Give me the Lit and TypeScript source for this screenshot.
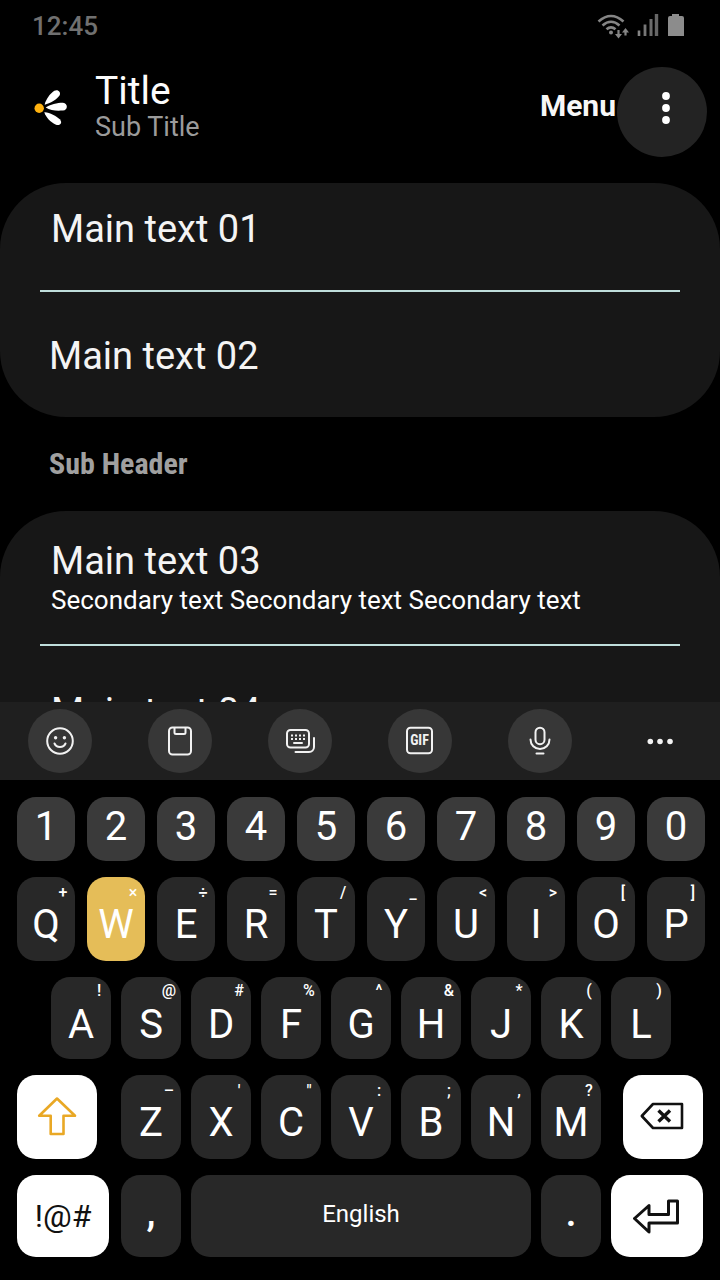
import { LitElement, html, css, svg, nothing } from "lit";
import { customElement, state } from "lit/decorators.js";

type Cap = { main: string; hint?: string };

const caps = (letters: string, hints: string[]): Cap[] =>
  [...letters].map((main, i) => ({ main, hint: hints[i] }));

const NUMBERS = caps("1234567890", []);
const TOP = caps("QWERTYUIOP", ["+", "×", "÷", "=", "/", "_", "<", ">", "[", "]"]);
const HOME = caps("ASDFGHJKL", ["!", "@", "#", "%", "^", "&", "*", "(", ")"]);
const BOTTOM = caps("ZXCVBNM", ["–", "'", '"', ":", ";", ",", "?"]);

@customElement("app-status-bar")
export class AppStatusBar extends LitElement {
  static styles = css`
    :host {
      display: flex;
      align-items: center;
      justify-content: space-between;
      height: 52px;
      padding: 0 34px 0 32px;
      font-size: 26px;
      line-height: 52px;
    }
    .time {
      font-weight: 500;
      color: #707070;
    }
    .icons {
      display: block;
      width: 90px;
      height: 28px;
    }
  `;
  render() {
    return html`
      <span class="time">12:45</span>
      <svg class="icons" viewBox="0 0 90 28" fill="none" stroke="#858585" stroke-width="2.6" aria-hidden="true">
        <path d="M2.5 9.5Q15 -1.500 27.500 9.500" />
        <path d="M6.500 13.500Q15 6 23.500 13.500" />
        <path d="M10.500 17.300Q15 13.300 19.500 17.300" />
        <circle cx="15" cy="20.500" r="2" fill="#858585" stroke="none" />
        <path d="M22.500 18v4M29.500 19v4.500" stroke-width="2.200" />
        <path d="M19 22h7l-3.500 4.500zM26 20.500l3.500-4.500l3.500 4.500z" fill="#858585" stroke="none" />
        <path d="M43 18.500v5.500" stroke="#858585" stroke-width="2.600" />
        <path d="M49 12.500v11.500" stroke="#767676" stroke-width="2.800" />
        <path d="M55 7v17" stroke="#6c6c6c" stroke-width="3" />
        <path d="M60.500 2v22" stroke="#666" stroke-width="3.400" />
        <path d="M76 2h7v2h3a2 2 0 0 1 2 2v18h-16v-18a2 2 0 0 1 2-2h2z" fill="#8c8c8c" stroke="none" />
      </svg>
    `;
  }
}

@customElement("app-header")
export class AppHeader extends LitElement {
  static styles = css`
    :host {
      display: flex;
      align-items: center;
      padding: 14px 13px 0 30px;
      height: 92px;
    }
    .logo {
      flex: none;
      width: 40px;
      height: 40px;
      margin-bottom: 8px;
    }
    .titles {
      flex: 1;
      min-width: 0;
      margin: 0 0 10px 25px;
    }
    h1,
    p {
      margin: 0;
      font-weight: 400;
    }
    h1 {
      font-size: 39px;
      line-height: 40px;
      color: #fcfcfc;
    }
    p {
      font-size: 27px;
      line-height: 32px;
      color: #9b9b9b;
    }
    button {
      border: 0;
      padding: 0;
      background: none;
      font: inherit;
      color: #f7f7f7;
      cursor: pointer;
    }
    .menu {
      font-size: 30px;
      line-height: 36px;
      font-weight: 700;
      margin: 0 1px 12px 0;
    }
    .more {
      width: 90px;
      height: 90px;
      border-radius: 50%;
      background: #232323;
    }
    .more svg {
      display: block;
      width: 90px;
      height: 90px;
    }
  `;
  render() {
    return html`
      <svg class="logo" viewBox="0 0 40 40" fill="#fff" aria-hidden="true">
        <circle cx="9.200" cy="20.300" r="4.700" fill="#ffb20f" />
        <path d="M14.600 16.700C15.500 12 20 5.500 24.300 2.800C27.800.8 31.200 4 29.600 7.300C27.300 11.600 20 15.300 14.600 16.700Z" />
        <path d="M15.700 19.500C20 16.500 28 14.600 33 14.700C38.300 15.200 38 22.300 33 22.500C27 22.900 20.500 22.800 15.700 19.500Z" />
        <path d="M14.300 24.200C19 23.800 26.500 28 29.800 31.300C33.200 35.200 29.500 38.500 25.500 36.500C20.500 34 16 29.500 14.300 24.200Z" />
      </svg>
      <div class="titles">
        <h1>Title</h1>
        <p>Sub Title</p>
      </div>
      <button class="menu" type="button">Menu</button>
      <button class="more" type="button" aria-label="More options">
        <svg viewBox="0 0 90 90" fill="#fff" aria-hidden="true">
          <circle cx="49" cy="29" r="3.900" />
          <circle cx="49" cy="41" r="3.900" />
          <circle cx="49" cy="53" r="3.900" />
        </svg>
      </button>
    `;
  }
}

@customElement("app-list")
export class AppList extends LitElement {
  static styles = css`
    :host {
      display: block;
      color: #f4f4f4;
    }
    ul {
      margin: 0;
      padding: 0 40px;
      list-style: none;
      background: #171717;
      border-radius: 66px;
    }
    li {
      padding: 23px 11px 38px;
      font-size: 38px;
      line-height: 46px;
    }
    li + li {
      border-top: 2px solid #bfdedb;
      padding: 41px 9px 38px;
    }
    .detailed li:first-child {
      padding: 27px 11px 28px;
    }
    .detailed li + li {
      padding: 43px 11px 38px;
    }
    .secondary {
      display: block;
      font-size: 26px;
      line-height: 32px;
      color: #fff;
    }
    h2 {
      margin: 0;
      padding: 0 49px;
      font-family: "Roboto Condensed", Roboto, sans-serif;
      font-size: 30px;
      line-height: 94px;
      font-weight: 700;
      color: #a0a0a0;
    }
  `;
  render() {
    return html`
      <ul>
        <li>Main text 01</li>
        <li>Main text 02</li>
      </ul>
      <h2>Sub Header</h2>
      <ul class="detailed">
        <li>
          Main text 03
          <span class="secondary">Secondary text Secondary text Secondary text</span>
        </li>
        <li>Main text 04</li>
      </ul>
    `;
  }
}

const TOOLS = [
  {
    label: "Emoji",
    art: svg`<circle cx="16" cy="16" r="12.800" />
      <path d="M10.500 18.500Q12 22 16 22T21.500 18.500" stroke-linecap="round" />
      <g fill="#f2f2f2" stroke="none"><circle cx="11.600" cy="12.800" r="1.700" /><circle cx="20.400" cy="12.800" r="1.700" /></g>`,
  },
  {
    label: "Clipboard",
    art: svg`<rect x="5" y="2.500" width="22" height="27" rx="3.500" />
      <path d="M10.500 3v4.500a1.500 1.500 0 0 0 1.500 1.500h8a1.500 1.500 0 0 0 1.500-1.500v-4.500" />`,
  },
  {
    label: "Keyboard modes",
    art: svg`<rect x="3" y="5" width="22" height="17.500" rx="3.500" />
      <path d="M30 13v9a5 5 0 0 1-5 5h-13.500" stroke-linecap="round" />
      <path d="M7 10.500h14M7 14h14" stroke-dasharray="2 2" />
      <path d="M10 18h8" stroke-linecap="round" />`,
  },
  {
    label: "GIF",
    art: svg`<rect x="3" y="2.800" width="25" height="25.500" rx="3.500" />
      <text class="gif" x="15.500" y="20" text-anchor="middle">GIF</text>`,
  },
  {
    label: "Voice input",
    art: svg`<rect x="11.500" y="2.700" width="9" height="16.500" rx="4.500" />
      <path d="M6.500 14.500a9.500 9.500 0 0 0 19 0M12.500 28.500h7" stroke-linecap="round" />`,
  },
];

@customElement("app-toolbar")
export class AppToolbar extends LitElement {
  static styles = css`
    :host {
      display: grid;
      grid-template-columns: repeat(6, 1fr);
      align-items: center;
      justify-items: center;
      height: 78px;
      background: #1f1f1f;
    }
    button {
      display: grid;
      place-items: center;
      width: 64px;
      height: 64px;
      padding: 0;
      border: 0;
      border-radius: 50%;
      background: #373737;
      cursor: pointer;
    }
    .plain {
      background: none;
    }
    svg {
      display: block;
      width: 32px;
      height: 32px;
      fill: none;
      stroke: #f2f2f2;
      stroke-width: 2;
    }
    .plain svg {
      fill: #f2f2f2;
      stroke: none;
    }
    .gif {
      font: 700 14px "Roboto Condensed", Roboto, sans-serif;
      fill: #f2f2f2;
      stroke: none;
    }
  `;
  render() {
    return html`
      ${TOOLS.map(
        (tool) => html`<button type="button" aria-label=${tool.label}>
          <svg viewBox="0 0 32 32" aria-hidden="true">${tool.art}</svg>
        </button>`
      )}
      <button class="plain" type="button" aria-label="More tools">
        <svg viewBox="0 0 32 32" aria-hidden="true">
          <circle cx="6.300" cy="16.500" r="2.800" />
          <circle cx="16" cy="16.500" r="2.800" />
          <circle cx="26" cy="16.500" r="2.800" />
        </svg>
      </button>
    `;
  }
}

@customElement("app-keyboard")
export class AppKeyboard extends LitElement {
  @state() private pressed = "W";

  static styles = css`
    :host {
      display: flex;
      flex-direction: column;
      gap: 16px;
      padding: 17px 0 23px;
      background: #000;
    }
    .row {
      display: grid;
      padding: 0 17px;
      gap: 10px;
      height: 82px;
    }
    .ten {
      grid-template-columns: repeat(10, 1fr);
      gap: 12px;
      padding-right: 15px;
      height: 84px;
    }
    .numbers {
      height: 64px;
    }
    .nine {
      grid-template-columns: repeat(9, 1fr);
      padding: 0 49px 0 51px;
    }
    .shifted {
      grid-template-columns: 80fr 482fr 80fr;
      gap: 22px;
      height: 84px;
    }
    .seven {
      display: grid;
      grid-template-columns: repeat(7, 1fr);
      gap: 10px;
      padding-left: 2px;
    }
    .last {
      grid-template-columns: 94fr 60fr 340fr 60fr 92fr;
    }
    button {
      position: relative;
      display: flex;
      justify-content: center;
      align-items: flex-start;
      min-width: 0;
      margin: 0;
      padding: 24px 0 0;
      border: 0;
      border-radius: 19px;
      background: #282828;
      color: #fff;
      font-family: inherit;
      font-size: 40px;
      line-height: 48px;
      font-weight: 400;
      cursor: pointer;
    }
    .numbers button {
      padding-top: 6px;
      background: #3a3a3a;
    }
    .nine .hint {
      top: 4px;
    }
    button.pressed {
      background: #e5bd58;
    }
    .hint {
      position: absolute;
      top: 6px;
      right: 0;
      width: 24px;
      text-align: center;
      font-size: 16px;
      line-height: 20px;
      font-weight: 500;
    }
    .punct {
      padding-top: 14px;
      font-weight: 500;
    }
    .space {
      align-items: center;
      padding: 0 0 5px;
      font-size: 24px;
    }
    .light {
      align-items: center;
      padding: 0;
      background: #fff;
      color: #111;
    }
    .symbols {
      margin-right: 2px;
      font-size: 32px;
    }
    svg {
      display: block;
      width: 48px;
      height: 48px;
      fill: none;
      stroke: #111;
      stroke-width: 2.6;
      stroke-linejoin: round;
      stroke-linecap: round;
    }
    .shift svg {
      stroke: #e9a825;
    }
  `;

  private cap(key: Cap) {
    return html`<button
      type="button"
      class=${key.main === this.pressed ? "pressed" : ""}
      @click=${() => (this.pressed = key.main)}
    >
      ${key.main}${key.hint ? html`<span class="hint">${key.hint}</span>` : nothing}
    </button>`;
  }

  render() {
    const row = (keys: Cap[]) => keys.map((key) => this.cap(key));
    return html`
      <div class="row ten numbers">${row(NUMBERS)}</div>
      <div class="row ten">${row(TOP)}</div>
      <div class="row nine">${row(HOME)}</div>
      <div class="row shifted">
        <button type="button" class="light shift" aria-label="Shift">
          <svg viewBox="0 0 48 48" aria-hidden="true">
            <path d="M24 5.500L42 22.800H30.500V41H17.700V22.800H6.200Z" />
          </svg>
        </button>
        <div class="seven">${row(BOTTOM)}</div>
        <button type="button" class="light" aria-label="Backspace">
          <svg viewBox="0 0 48 48" aria-hidden="true">
            <path d="M2.800 23L14 11H43V35H14Z" />
            <path d="M19.500 17.500L31 28.500M31 17.500L19.500 28.500" stroke-width="3.400" stroke-linecap="butt" />
          </svg>
        </button>
      </div>
      <div class="row last">
        <button type="button" class="light symbols">!@#</button>
        <button type="button" class="punct">,</button>
        <button type="button" class="space">English</button>
        <button type="button" class="punct">.</button>
        <button type="button" class="light" aria-label="Enter">
          <svg viewBox="0 0 48 48" aria-hidden="true">
            <path d="M1.500 26.500L16 13.500V22.500H35.500V9H44.500V31H16V40Z" stroke-width="3" />
          </svg>
        </button>
      </div>
    `;
  }
}

@customElement("app-root")
export class AppRoot extends LitElement {
  static styles = css`
    :host {
      display: flex;
      flex-direction: column;
      height: 100vh;
      overflow: hidden;
      background: #000;
      font-family: Roboto, "Noto Sans", sans-serif;
    }
    app-status-bar,
    app-header,
    app-toolbar,
    app-keyboard {
      flex: none;
    }
    main {
      flex: 1;
      min-height: 0;
      margin-top: 25px;
      overflow: hidden;
    }
  `;
  render() {
    return html`
      <app-status-bar></app-status-bar>
      <app-header></app-header>
      <main><app-list></app-list></main>
      <app-toolbar></app-toolbar>
      <app-keyboard></app-keyboard>
    `;
  }
}
